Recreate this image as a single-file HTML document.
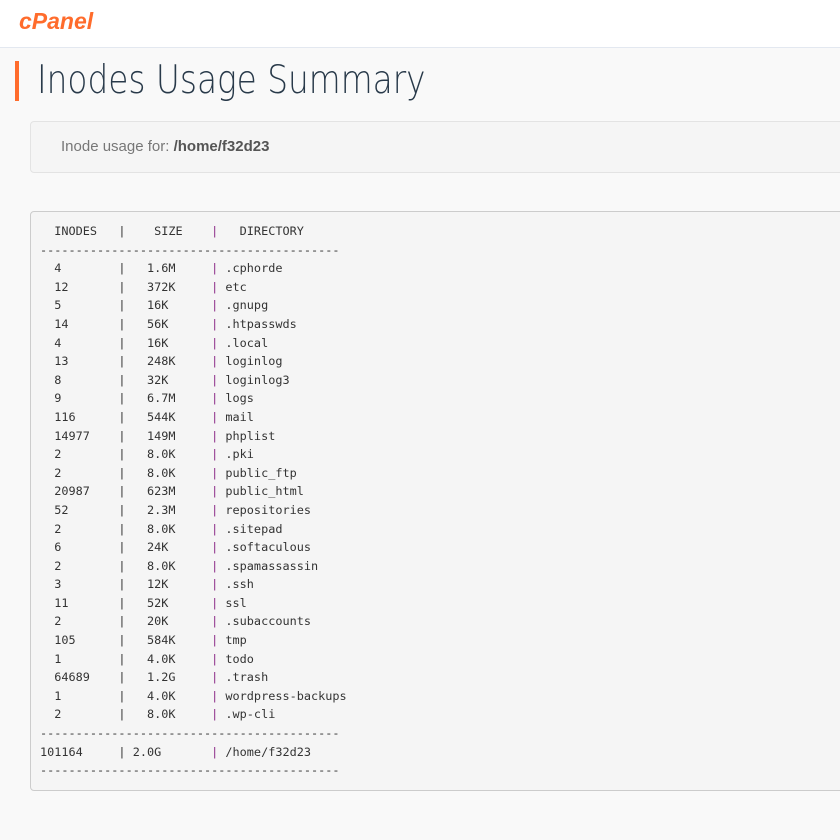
<!DOCTYPE html>
<html><head><meta charset="utf-8"><style>
body{margin:0;width:840px;height:840px;background:#f9f9f9;overflow:hidden;font-family:"Liberation Sans",sans-serif}
.top{height:47px;background:#fff;border-bottom:1px solid #e3e8f0;position:relative}
.logo{position:absolute;left:19px;top:8px;font:italic bold 23px "Liberation Sans",sans-serif;color:#ff6c2c;letter-spacing:0px}
.bar{position:absolute;left:15px;top:61px;width:4px;height:40px;background:#ff6c2c}
h1{position:absolute;left:37px;top:58px;margin:0;font-size:39px;color:#293a4a;font-family:"DejaVu Sans","Liberation Sans",sans-serif;font-weight:200;transform:scaleX(0.84);transform-origin:0 0;white-space:nowrap}
.info{position:absolute;left:30px;top:121px;width:830px;height:52px;background:#f5f5f5;border:1px solid #e3e3e3;border-radius:4px;box-sizing:border-box}
.info span{position:absolute;left:30px;top:16px;font-size:15px;color:#777}
.info b{color:#555}
pre{position:absolute;left:30px;top:211px;width:830px;height:580px;margin:0;box-sizing:border-box;background:#f5f5f5;border:1px solid #ccc;border-radius:4px;padding:10px 0 0 9px;font:11.85px/18.6px "DejaVu Sans Mono",monospace;color:#333}
.p{color:#8e2e8a}
</style></head><body>
<div class="top"><div class="logo">cPanel</div></div>
<div class="bar"></div>
<h1>Inodes Usage Summary</h1>
<div class="info"><span>Inode usage for: <b>/home/f32d23</b></span></div>
<pre>  INODES   |    SIZE    <span class="p">|</span>   DIRECTORY
------------------------------------------
  4        |   1.6M     <span class="p">|</span> .cphorde
  12       |   372K     <span class="p">|</span> etc
  5        |   16K      <span class="p">|</span> .gnupg
  14       |   56K      <span class="p">|</span> .htpasswds
  4        |   16K      <span class="p">|</span> .local
  13       |   248K     <span class="p">|</span> loginlog
  8        |   32K      <span class="p">|</span> loginlog3
  9        |   6.7M     <span class="p">|</span> logs
  116      |   544K     <span class="p">|</span> mail
  14977    |   149M     <span class="p">|</span> phplist
  2        |   8.0K     <span class="p">|</span> .pki
  2        |   8.0K     <span class="p">|</span> public_ftp
  20987    |   623M     <span class="p">|</span> public_html
  52       |   2.3M     <span class="p">|</span> repositories
  2        |   8.0K     <span class="p">|</span> .sitepad
  6        |   24K      <span class="p">|</span> .softaculous
  2        |   8.0K     <span class="p">|</span> .spamassassin
  3        |   12K      <span class="p">|</span> .ssh
  11       |   52K      <span class="p">|</span> ssl
  2        |   20K      <span class="p">|</span> .subaccounts
  105      |   584K     <span class="p">|</span> tmp
  1        |   4.0K     <span class="p">|</span> todo
  64689    |   1.2G     <span class="p">|</span> .trash
  1        |   4.0K     <span class="p">|</span> wordpress-backups
  2        |   8.0K     <span class="p">|</span> .wp-cli
------------------------------------------
101164     | 2.0G       <span class="p">|</span> /home/f32d23
------------------------------------------</pre>
</body></html>
